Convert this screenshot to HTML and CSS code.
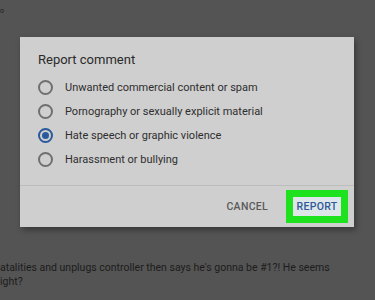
FILE: index.html
```html
<!DOCTYPE html>
<html>

<head>
    <meta name="viewport" content="width=device-width, initial-scale=1.0" />
    <title>Report comment</title>
    <link rel="stylesheet" href="styles.css">
</head>

<body>
    <div class="page">
        <div class="top-note">o</div>

        <!-- REPORT DIALOG -->
        <div class="dialog">
            <div class="dialog-title">Report comment</div>
            <ul class="options">
                <li class="option"><span class="radio"></span>Unwanted commercial content or spam</li>
                <li class="option"><span class="radio"></span>Pornography or sexually explicit material</li>
                <li class="option"><span class="radio checked"></span>Hate speech or graphic violence</li>
                <li class="option"><span class="radio"></span>Harassment or bullying</li>
            </ul>
            <div class="dialog-actions">
                <div class="btn btn-cancel">CANCEL</div>
                <div class="report-highlight">
                    <div class="btn btn-report">REPORT</div>
                </div>
            </div>
        </div>

        <!-- COMMENT BELOW -->
        <div class="comment">
            <p>atalities and unplugs controller then says he's gonna be #1?! He seems</p>
            <p>ight?</p>
        </div>
    </div>
</body>

</html>
```

FILE: styles.css
```css
body {
    margin: 0;
    background-color: #545454;
    font-family: Roboto, "Liberation Sans", Arial, sans-serif;
    overflow: hidden;
}

.page {
    height: 300px;
}

.top-note {
    height: 37px;
    padding-top: 7px;
    box-sizing: border-box;
    font-size: 7px;
    color: #1e1e1e;
}

.dialog {
    width: 334px;
    height: 190px;
    margin-left: 20px;
    background-color: #cfcfcf;
    box-shadow: 2px 3px 6px rgba(0, 0, 0, 0.35);
    display: flex;
    flex-direction: column;
    box-sizing: border-box;
}

.dialog-title {
    padding: 15px 0 0 18px;
    font-size: 13px;
    color: #2a2a2a;
    height: 38px;
    box-sizing: border-box;
}

.options {
    list-style-type: none;
    margin: 0;
    padding: 0 0 0 18px;
    flex-grow: 1;
}

.option {
    display: flex;
    align-items: center;
    height: 24px;
    font-size: 11px;
    color: #2e2e2e;
}

.radio {
    width: 11px;
    height: 11px;
    border: 2px solid #707070;
    border-radius: 50%;
    margin-right: 12px;
    flex-shrink: 0;
    box-sizing: content-box;
    display: flex;
    align-items: center;
    justify-content: center;
}

.radio.checked {
    border-color: #2b5a9c;
}

.radio.checked::after {
    content: "";
    width: 7px;
    height: 7px;
    border-radius: 50%;
    background-color: #2b5a9c;
}

.dialog-actions {
    height: 42px;
    border-top: 1px solid #bcbcbc;
    display: flex;
    align-items: center;
    justify-content: flex-end;
    padding-right: 6px;
    box-sizing: border-box;
}

.btn {
    font-size: 10.5px;
    font-weight: 500;
    letter-spacing: 0.3px;
}

.btn-cancel {
    color: #5a5a5a;
    margin-right: 18px;
}

.report-highlight {
    background-color: #1fe21f;
    padding: 7px;
    width: 62px;
    height: 33px;
    box-sizing: border-box;
    display: flex;
}

.btn-report {
    flex-grow: 1;
    background-color: #dfe6ea;
    color: #2d5a98;
    display: flex;
    align-items: center;
    justify-content: center;
}

.comment {
    padding-top: 34px;
    font-size: 10.5px;
    color: #1c1c1c;
}

.comment p {
    margin: 0;
    line-height: 14px;
}
```
